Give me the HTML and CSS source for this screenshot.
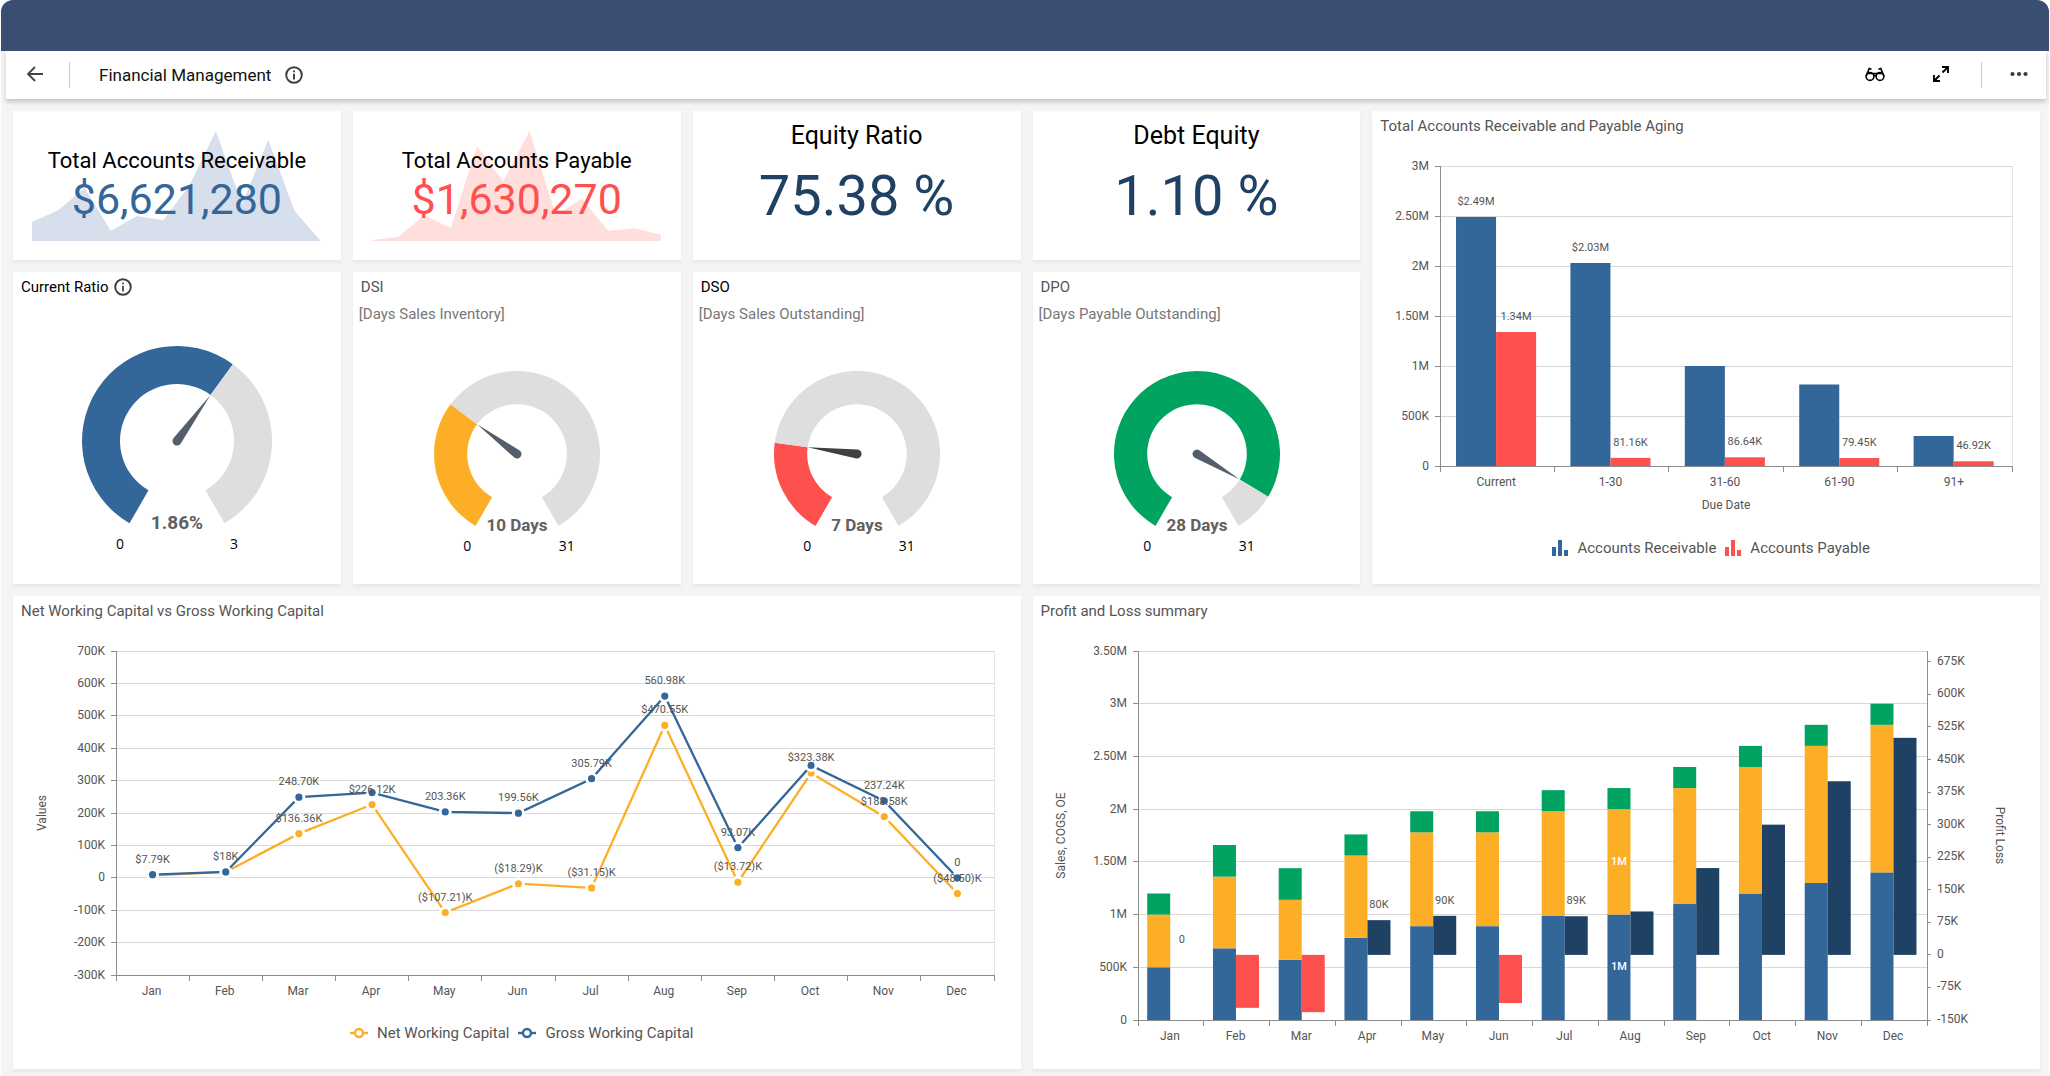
FILE: index.html
```
<!DOCTYPE html>
<html lang="en">
<head>
<meta charset="utf-8">
<title>Financial Management</title>
<link rel="stylesheet" href="styles.css">
</head>
<body>
<div class="app">
  <div class="brand-bar"></div>
  <header class="header">
    <button class="icon-btn back" aria-label="Back"><svg width="18" height="18" viewBox="0 0 18 18"><path d="M9 1 2 8 9 15M2 8H17" fill="none" stroke="#444" stroke-width="1.800"/></svg></button>
    <span class="divider"></span>
    <h1 class="page-title">Financial Management</h1>
    <button class="icon-btn" aria-label="Dashboard info"><svg width="18" height="18" viewBox="0 0 18 18"><circle cx="9" cy="9" r="7.800" fill="none" stroke="#3c3c3c" stroke-width="1.900"/><path d="M9 7.800V13.500M9 4.500V6.300" stroke="#3c3c3c" stroke-width="1.900"/></svg></button>
    <span class="spacer"></span>
    <button class="icon-btn view" aria-label="View mode"><svg width="20" height="16" viewBox="0 0 20 16" fill="none" stroke="#000" stroke-width="1.600"><circle cx="5" cy="9.500" r="3.900"/><circle cx="15" cy="9.500" r="3.900"/><path d="M8.900 8.500h2.200M1.200 9 4.200 1.400 6.500 2.200M18.800 9 15.800 1.400 13.500 2.200M1.500 6.500h17"/></svg></button>
    <button class="icon-btn expand" aria-label="Full screen"><svg width="18" height="18" viewBox="0 0 18 18" fill="none" stroke="#000" stroke-width="1.900"><path d="M10 1h6v6M16 1 10.500 6.500M8 15H2v-6M2 15 7.500 9.500"/></svg></button>
    <span class="divider"></span>
    <button class="icon-btn more" aria-label="More"><svg width="18" height="8" viewBox="0 0 18 8" fill="#3c3c3c"><circle cx="2.500" cy="3" r="2.100"/><circle cx="9" cy="3" r="2.100"/><circle cx="15.500" cy="3" r="2.100"/></svg></button>
  </header>

  <main class="board">
    <section class="card kpi kpi-trend">
      <svg class="trend" viewBox="0 0 11 110" preserveAspectRatio="none"><path fill="#d8dfec" d="M0 110V91L1 79.300 2 57 3 99.700 4 85 5 89.300 6 54 7 0 8 73.300 9 8.700 10 80 11 110Z"/></svg>
      <h2 class="kpi-title">Total Accounts Receivable</h2>
      <p class="kpi-value blue">$6,621,280</p>
    </section>
    <section class="card kpi kpi-trend">
      <svg class="trend" viewBox="0 0 11 110" preserveAspectRatio="none"><path fill="#ffdedc" d="M0 110V109L1 106 2 84.300 3 97.300 4 15.300 5 50.300 6 0 7 84.300 8 67.700 9 100 10 97.300 11 103.700V110Z"/></svg>
      <h2 class="kpi-title">Total Accounts Payable</h2>
      <p class="kpi-value red">$1,630,270</p>
    </section>
    <section class="card kpi kpi-ratio">
      <h2 class="kpi-title">Equity Ratio</h2>
      <p class="kpi-value navy">75.38 %</p>
    </section>
    <section class="card kpi kpi-ratio">
      <h2 class="kpi-title">Debt Equity</h2>
      <p class="kpi-value navy">1.10 %</p>
    </section>

    <section class="card aging">
      <h2 class="card-title">Total Accounts Receivable and Payable Aging</h2>
      <div class="chart" data-chart="aging"></div>
      <div class="legend">
        <span class="legend-item"><svg width="16" height="16" viewBox="0 0 16 16" fill="#336699"><path d="M0 7h4v9H0zM6 0h4v16H6zM12 10h4v6h-4z"/></svg>Accounts Receivable</span>
        <span class="legend-item"><svg width="16" height="16" viewBox="0 0 16 16" fill="#ff5050"><path d="M0 7h4v9H0zM6 0h4v16H6zM12 10h4v6h-4z"/></svg>Accounts Payable</span>
      </div>
    </section>

    <section class="card">
      <h2 class="card-title strong">Current Ratio <button class="icon-btn" aria-label="Current Ratio info"><svg width="18" height="18" viewBox="0 0 18 18"><circle cx="9" cy="9" r="7.800" fill="none" stroke="#3c3c3c" stroke-width="1.900"/><path d="M9 7.800V13.500M9 4.500V6.300" stroke="#3c3c3c" stroke-width="1.700"/></svg></button></h2>
      <div class="chart" data-gauge="1.86" data-max="3" data-radius="95" data-text="1.86%" data-color="#336699" data-needle="#555f6c"></div>
    </section>
    <section class="card">
      <h2 class="card-title">DSI</h2>
      <p class="card-sub">[Days Sales Inventory]</p>
      <div class="chart" data-gauge="10" data-max="31" data-radius="83" data-text="10 Days" data-color="#fcaf26" data-needle="#555f6c"></div>
    </section>
    <section class="card">
      <h2 class="card-title strong">DSO</h2>
      <p class="card-sub">[Days Sales Outstanding]</p>
      <div class="chart" data-gauge="7" data-max="31" data-radius="83" data-text="7 Days" data-color="#ff5050" data-needle="#404040"></div>
    </section>
    <section class="card">
      <h2 class="card-title">DPO</h2>
      <p class="card-sub">[Days Payable Outstanding]</p>
      <div class="chart" data-gauge="28" data-max="31" data-radius="83" data-text="28 Days" data-color="#00a460" data-needle="#555f6c"></div>
    </section>

    <section class="card wide">
      <h2 class="card-title">Net Working Capital vs Gross Working Capital</h2>
      <div class="chart" data-chart="capital"></div>
      <div class="legend">
        <span class="legend-item"><svg width="18" height="12" viewBox="0 0 18 12" fill="#fff" stroke="#fcaf26" stroke-width="2.400"><path d="M0 6h18"/><circle cx="9" cy="6" r="4"/></svg>Net Working Capital</span>
        <span class="legend-item"><svg width="18" height="12" viewBox="0 0 18 12" fill="#fff" stroke="#336699" stroke-width="2.400"><path d="M0 6h18"/><circle cx="9" cy="6" r="4"/></svg>Gross Working Capital</span>
      </div>
    </section>
    <section class="card wide">
      <h2 class="card-title">Profit and Loss summary</h2>
      <div class="chart" data-chart="profit"></div>
    </section>
  </main>
</div>
<script src="charts.js"></script>
</body>
</html>
```
FILE: styles.css
```
* { box-sizing: border-box; }
body {
  margin: 0;
  background: #fff;
  color: #555;
  font-family: Roboto, "Liberation Sans", sans-serif;
}
h1, h2, p { margin: 0; font-weight: 400; }
.app {
  display: flex;
  flex-direction: column;
  min-height: 100vh;
  margin: 0 1px;
  border-radius: 12px 12px 0 0;
  background: #f4f4f5;
  overflow: hidden;
}
.brand-bar { height: 51px; background: #3a4d73; }
.header {
  display: flex;
  align-items: center;
  height: 48px;
  margin: 0 3px 0 5px;
  padding: 0 18px 0 20px;
  background: #fff;
  box-shadow: 0 3px 4px #c8c8c8;
}
.icon-btn {
  display: inline-flex;
  padding: 0;
  border: 0;
  background: none;
}
.back { margin-right: 25px; }
.divider { width: 1px; height: 26px; background: #c3cdd6; }
.page-title {
  margin: 0 14px 0 29px;
  color: #111;
  font-size: 17px;
  line-height: 24px;
}
.spacer { flex: 1; }
.view { margin-right: 47px; }
.expand { margin-right: 31px; }
.more { margin-left: 28px; }

.board {
  flex: 1;
  display: grid;
  grid-template-columns: repeat(6, minmax(0, 1fr));
  grid-template-rows: minmax(149px, 149fr) minmax(312px, 312fr) minmax(473px, 473fr);
  gap: 12px;
  padding: 12px 9px 7px 12px;
}
.card {
  position: relative;
  display: flex;
  flex-direction: column;
  min-width: 0;
  background: #fff;
  box-shadow: 0 3px 3px #e9e9ea;
}
.aging { grid-column: 5 / span 2; grid-row: 1 / span 2; }
.wide { grid-column: span 3; }

.kpi { align-items: center; text-align: center; }
.kpi-title { position: relative; color: #000; }
.kpi-value { position: relative; }
.kpi-trend { padding-top: 36px; }
.kpi-trend .kpi-title { font-size: 22px; line-height: 28px; }
.kpi-trend .kpi-value { font-size: 43px; line-height: 48px; }
.kpi-ratio { gap: 13px; padding-top: 10px; }
.kpi-ratio .kpi-title { font-size: 25px; line-height: 30px; }
.kpi-ratio .kpi-value { font-size: 56px; line-height: 64px; }
.trend {
  position: absolute;
  inset: 20px 20px 19px 19px;
  width: calc(100% - 39px);
  height: calc(100% - 39px);
}
.blue { color: #336699; }
.red { color: #ff5050; }
.navy { color: #1f4264; }

.card-title {
  display: flex;
  align-items: center;
  gap: 6px;
  padding: 5px 7px 0 8px;
  font-size: 15px;
  line-height: 20px;
}
.strong { color: #000; }
.card-sub {
  margin-top: 7px;
  padding: 0 6px;
  color: #777;
  font-size: 15px;
  line-height: 20px;
}
.chart { flex: 1; min-height: 0; overflow: hidden; }
.chart svg { display: block; }
.legend {
  display: flex;
  justify-content: center;
  gap: 9px;
  padding: 0 0 26px 10px;
  font-size: 15px;
  line-height: 20px;
}
.legend-item { display: flex; align-items: center; gap: 9px; }

.axis-text { fill: #555; font-size: 12px; }
.data-text { fill: #555; font-size: 11px; }
.inside-text { fill: #fff; font-size: 11px; font-weight: 500; }
.gauge-text { fill: #606060; font-size: 17px; font-weight: 700; }
.gauge-text.large { font-size: 19px; }
.range-text { fill: #000; font-family: "Open Sans", sans-serif; font-size: 14px; }
.end { text-anchor: end; }
.mid { text-anchor: middle; }
```
FILE: charts.js
```
const BLUE = '#336699', AMBER = '#fcaf26', GREEN = '#00a460', RED = '#ff5050', NAVY = '#1f4264';
const MONTHS = ['Jan', 'Feb', 'Mar', 'Apr', 'May', 'Jun', 'Jul', 'Aug', 'Sep', 'Oct', 'Nov', 'Dec'];

const rect = (x, y, w, h, fill) => `<rect x="${x}" y="${y}" width="${w}" height="${h}" fill="${fill}"/>`;
const text = (x, y, cls, s, extra = '') => `<text x="${x}" y="${y}" class="${cls}" ${extra}>${s}</text>`;
const line = (x1, y1, x2, y2, color, w = 1) =>
  `<path d="M${x1} ${y1}L${x2} ${y2}" stroke="${color}" stroke-width="${w}" fill="none"/>`;
const snap = v => Math.floor(v) + 0.5;

// Gridlines, axis lines, ticks and labels shared by all cartesian charts.
function frame(w, h, m, ticks, cats) {
  const l = m.left, r = w - m.right, t = m.top, b = h - m.bottom;
  const step = (r - l) / cats.length;
  let grid = '', axes = '';
  ticks.forEach((label, i) => {
    const y = snap(b - (b - t) * i / (ticks.length - 1));
    if (i) grid += line(l, y, r, y, '#d8d8d8');
    axes += line(l - 5, y, l, y, '#8c8c8c') + text(l - 11, y + 3, 'axis-text end', label);
  });
  grid += line(snap(r), t, snap(r), b, '#e4e4e4');
  axes += line(snap(l), t, snap(l), b, '#8c8c8c') + line(l, snap(b), r, snap(b), '#8c8c8c');
  for (let i = 0; i <= cats.length; i++) {
    const x = snap(l + step * i);
    axes += line(x, b, x, b + 6, '#8c8c8c');
    if (i < cats.length) axes += text(l + step * (i + 0.5) - 1, b + 20, 'axis-text mid', cats[i]);
  }
  return { l, r, t, b, step, grid, axes };
}

const charts = {
  aging(w, h) {
    const f = frame(w, h, { left: 68, right: 28, top: 30, bottom: 72 },
      ['0', '500K', '1M', '1.50M', '2M', '2.50M', '3M'], ['Current', '1-30', '31-60', '61-90', '91+']);
    const rows = [[2.49, 1.34, '$2.49M', '1.34M'], [2.03, 0.08116, '$2.03M', '81.16K'],
      [1, 0.08664, '', '86.64K'], [0.815, 0.07945, '', '79.45K'], [0.3, 0.04692, '', '46.92K']];
    const bw = f.step * 0.35;
    let bars = '', labels = '';
    rows.forEach((d, i) => [0, 1].forEach(k => {
      const x = f.l + f.step * (i + 0.14) + bw * k, bh = (f.b - f.t) * d[k] / 3;
      bars += rect(x, f.b - bh, bw, bh, k ? RED : BLUE);
      labels += text(x + bw / 2, f.b - bh - 12, 'data-text mid', d[k + 2]);
    }));
    return f.grid + bars + f.axes + labels + text((f.l + f.r) / 2, f.b + 43, 'axis-text mid', 'Due Date');
  },

  capital(w, h) {
    const f = frame(w, h, { left: 103, right: 27, top: 30, bottom: 48 },
      ['-300K', '-200K', '-100K', '0', '100K', '200K', '300K', '400K', '500K', '600K', '700K'], MONTHS);
    const net = [[7.79, '$7.79K'], [18, '$18K'], [136.36, '$136.36K'], [226.12, '$226.12K'],
      [-107.21, '($107.21)K'], [-18.29, '($18.29)K'], [-31.15, '($31.15)K'], [470.55, '$470.55K'],
      [-13.72, '($13.72)K'], [323.38, '$323.38K'], [188.58, '$188.58K'], [-48.5, '($48.50)K']];
    const gross = [[9.5, ''], [18, ''], [248.7, '248.70K'], [263, ''], [203.36, '203.36K'],
      [199.56, '199.56K'], [305.79, '305.79K'], [560.98, '560.98K'], [93.07, '93.07K'],
      [346.7, ''], [237.24, '237.24K'], [0, '0']];
    const X = i => f.l + f.step * (i + 0.5), Y = v => f.b - (f.b - f.t) * (v + 300) / 1000;
    let lines = '', labels = '';
    [[net, AMBER], [gross, BLUE]].forEach(([rows, color]) => {
      lines += `<path fill="none" stroke="${color}" stroke-width="2.3" d="M${rows.map((d, i) => X(i) + ' ' + Y(d[0])).join('L')}"/>`;
      rows.forEach((d, i) => {
        lines += `<circle cx="${X(i)}" cy="${Y(d[0])}" r="5" fill="${color}" stroke="#fff" stroke-width="2.8"/>`;
        labels += text(X(i), Y(d[0]) - 12, 'data-text mid', d[1]);
      });
    });
    const my = (f.t + f.b) / 2;
    return f.grid + f.axes + lines + labels + text(33, my, 'axis-text mid', 'Values', `transform="rotate(-90 33 ${my})"`);
  },

  profit(w, h) {
    const f = frame(w, h, { left: 105, right: 114, top: 30, bottom: 49 },
      ['0', '500K', '1M', '1.50M', '2M', '2.50M', '3M', '3.50M'], MONTHS);
    // Sales, COGS, operating expenses (millions), profit (thousands), profit label
    const rows = [[0.5, 0.5, 0.2, 0, '0'], [0.68, 0.68, 0.3, -122, ''], [0.57, 0.57, 0.3, -132, ''],
      [0.78, 0.78, 0.2, 80, '80K'], [0.89, 0.89, 0.2, 90, '90K'], [0.89, 0.89, 0.2, -111, ''],
      [0.99, 0.99, 0.2, 89, '89K'], [1, 1, 0.2, 100, ''], [1.1, 1.1, 0.2, 200, ''],
      [1.2, 1.2, 0.2, 300, ''], [1.3, 1.3, 0.2, 400, ''], [1.4, 1.4, 0.2, 500, '']];
    const ph = f.b - f.t, bw = f.step * 0.35, P = v => f.b - ph * (v + 150) / 850;
    let bars = '', labels = '';
    rows.forEach((d, i) => {
      const x = f.l + f.step * (i + 0.14);
      let base = f.b;
      [BLUE, AMBER, GREEN].forEach((color, k) => {
        const bh = ph * d[k] / 3.5;
        base -= bh;
        bars += rect(x, base, bw, bh, color);
        if (d[k] === 1) labels += text(x + bw / 2, base + bh / 2 + 3, 'inside-text mid', '1M');
      });
      bars += rect(x + bw, Math.min(P(d[3]), P(0)), bw, Math.abs(P(d[3]) - P(0)), d[3] < 0 ? RED : NAVY);
      labels += text(x + bw * 1.5, P(d[3]) - 12, 'data-text mid', d[4]);
    });
    let right = line(snap(f.r), f.t, snap(f.r), f.b, '#8c8c8c');
    for (let v = -150; v <= 675; v += 75) {
      right += line(f.r, snap(P(v)), f.r + 4, snap(P(v)), '#8c8c8c') +
        text(f.r + 10, P(v) + 3, 'axis-text', v ? v + 'K' : '0');
    }
    const my = (f.t + f.b) / 2, px = w - 45;
    return f.grid + bars + f.axes + right + labels +
      text(32, my, 'axis-text mid', 'Sales, COGS, OE', `transform="rotate(-90 32 ${my})"`) +
      text(px, my, 'axis-text mid', 'Profit Loss', `transform="rotate(90 ${px} ${my})"`);
  }
};

// Open ring gauge: a 300 degree sweep that starts at the lower left.
function gauge(w, h, d) {
  const R = +d.radius, r = R * 0.6, cx = w / 2, cy = Math.round(h / 2);
  const at = (deg, rad) => {
    const a = deg * Math.PI / 180;
    return `${cx + Math.cos(a) * rad} ${cy + Math.sin(a) * rad}`;
  };
  const arc = (a, b, fill) => {
    const big = b - a > 180 ? 1 : 0;
    return `<path fill="${fill}" d="M${at(a, R)}A${R} ${R} 0 ${big} 1 ${at(b, R)}L${at(b, r)}A${r} ${r} 0 ${big} 0 ${at(a, r)}Z"/>`;
  };
  const end = 120 + 300 * d.gauge / d.max;
  return arc(120, end, d.color) + arc(end, 420, '#dedede') +
    `<path fill="${d.needle}" d="M${at(end, r)}L${at(end + 90, 4.5)}A4.500 4.500 0 0 1 ${at(end - 90, 4.5)}Z"/>` +
    text(cx, cy + R * 0.9 + 2, R > 90 ? 'gauge-text large mid' : 'gauge-text mid', d.text) +
    text(cx - r, cy + R * 0.9 + 22, 'range-text mid', '0') +
    text(cx + r, cy + R * 0.9 + 22, 'range-text mid', d.max);
}

function render() {
  document.querySelectorAll('.chart').forEach(el => {
    el.innerHTML = '';
    const w = el.clientWidth, h = el.clientHeight;
    const body = el.dataset.chart ? charts[el.dataset.chart](w, h) : gauge(w, h, el.dataset);
    el.innerHTML = `<svg width="${w}" height="${h}">${body}</svg>`;
  });
}
render();
window.addEventListener('resize', render);
```
